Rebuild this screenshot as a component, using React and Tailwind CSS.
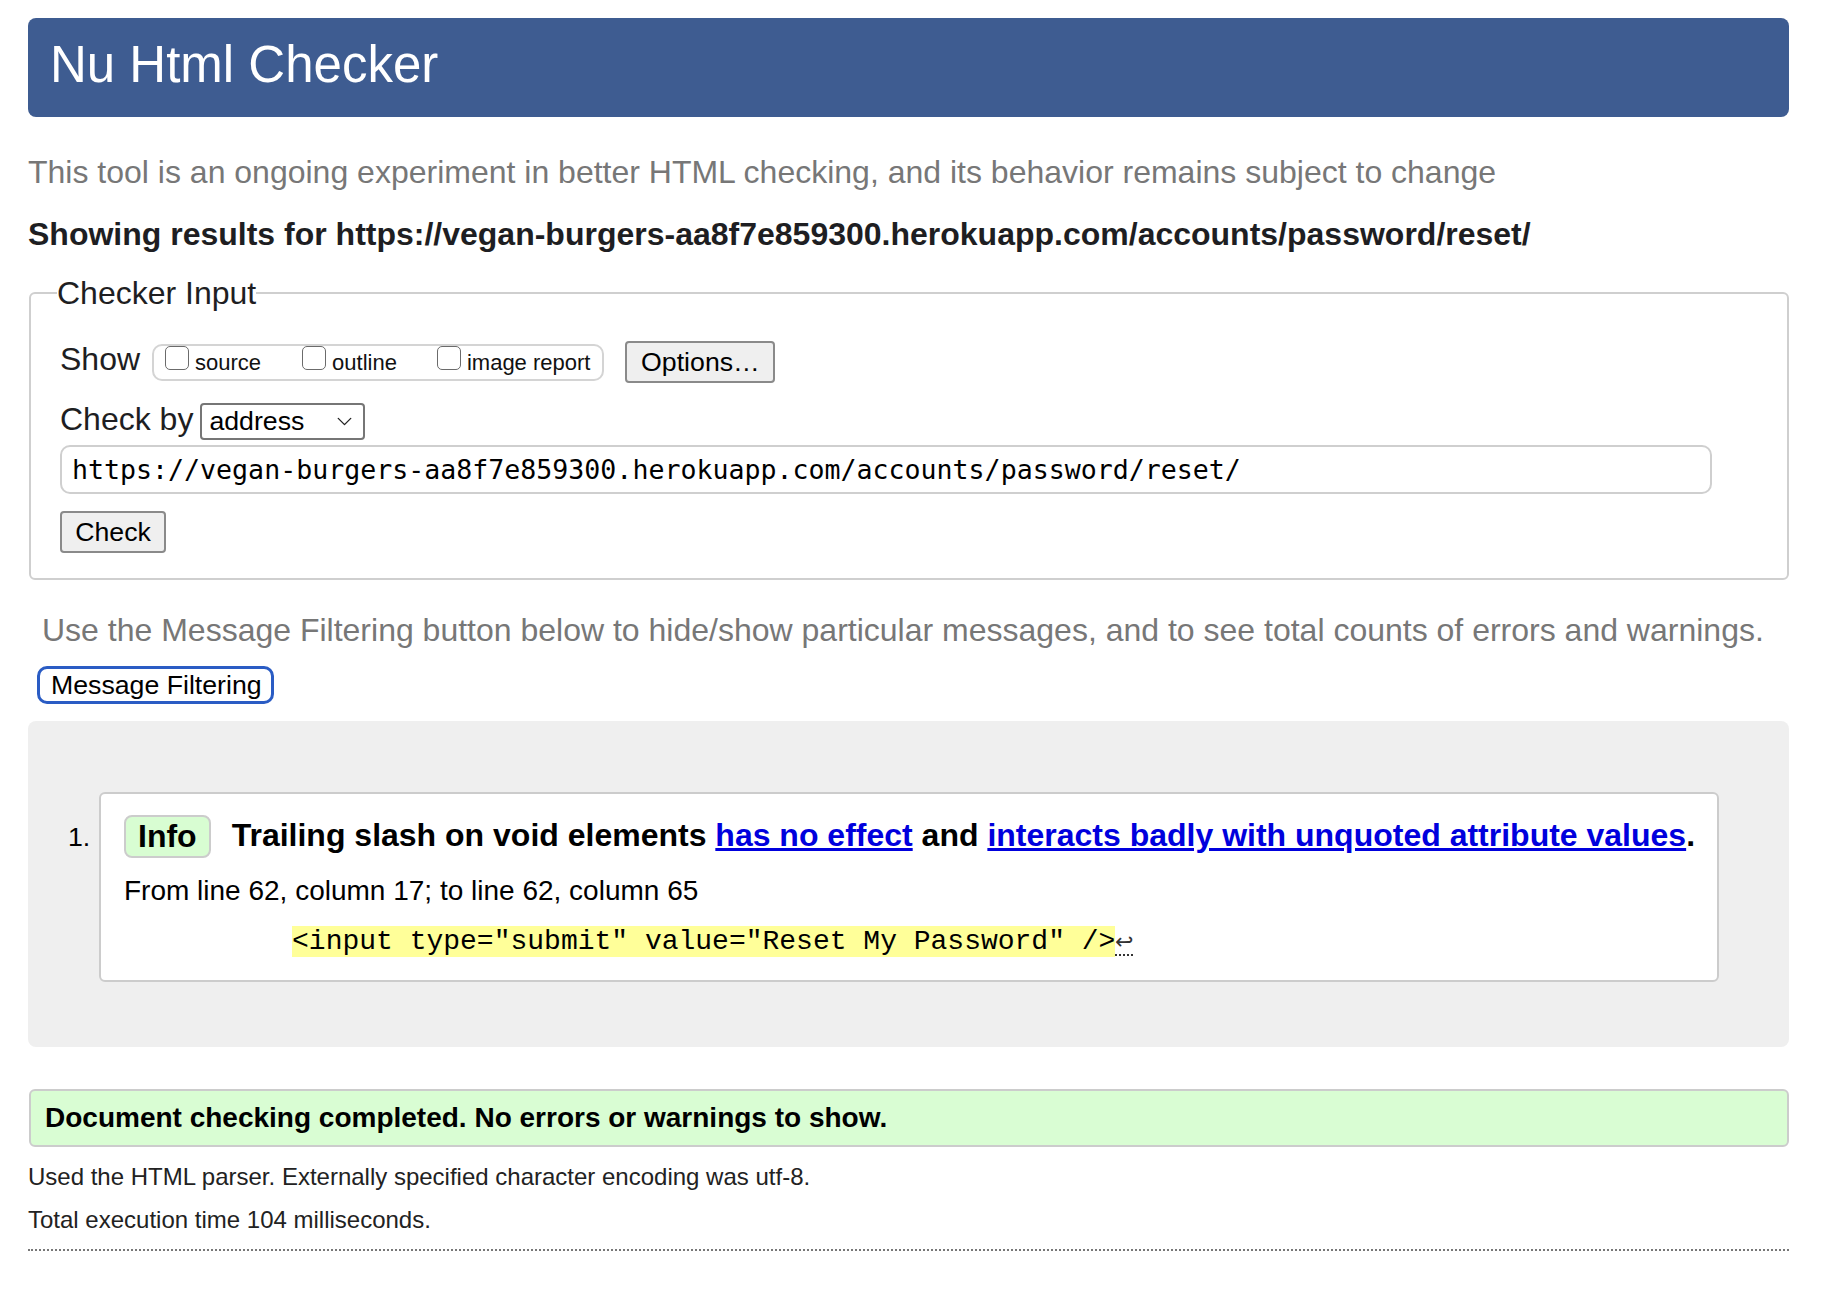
import { ChevronDown } from 'lucide-react'

const sans = "font-['Liberation_Sans','Helvetica','Arial',sans-serif]"

function Box({ label }) {
  return (
    <label className="flex items-end h-[24px]">
      <span className="w-[24px] h-[24px] border-[1.5px] border-[#6b6b6b] rounded-[5px] bg-white shrink-0" />
      <span className="ml-[6px] text-[22px] leading-[15px] text-[#111]">{label}</span>
    </label>
  )
}

export default function App() {
  return (
    <div className={`${sans} bg-white min-h-[1294px] pl-[28px] pr-[35px] pt-[18px] text-[#111]`}>
      <div className="bg-[#3e5c91] rounded-[8px] h-[99px] pl-[22px] pt-[18px]">
        <h1 className="text-[51px] leading-[57px] text-white">Nu Html Checker</h1>
      </div>

      <p className="mt-[35px] text-[32px] leading-[40px] text-[#777777]">
        This tool is an ongoing experiment in better HTML checking, and its behavior remains subject to change
      </p>
      <p className="mt-[22px] text-[32px] leading-[40px] font-bold text-[#1e1e22]">
        Showing results for https://vegan-burgers-aa8f7e859300.herokuapp.com/accounts/password/reset/
      </p>

      <fieldset className="mt-[19px] ml-[1px] border-2 border-[#cfcfcf] rounded-[6px] pl-[29px] pr-[20px] pt-[28px] pb-[25px]">
        <legend className="-ml-[3px] text-[32px] leading-[40px] text-[#1e1e22]">Checker Input</legend>

        <div className="flex items-start h-[42px]">
          <span className="text-[32px] leading-[36px] text-[#1e1e22]">Show</span>
          <div className="ml-[12px] mt-[3px] h-[37px] border-2 border-[#d4d4d4] rounded-[10px] flex items-start pl-[11px] pr-[12px]">
            <Box label="source" />
            <div className="w-[41px]" />
            <Box label="outline" />
            <div className="w-[40px]" />
            <Box label="image report" />
          </div>
          <button className="ml-[21px] w-[150px] h-[42px] bg-[#efefef] border-2 border-[#8a8a8a] rounded-[4px] text-[26.7px] leading-[38px] text-black">
            Options…
          </button>
        </div>

        <div className="mt-[20px] flex items-start">
          <span className="-mt-[2px] text-[32px] leading-[36px] text-[#1e1e22]">Check by</span>
          <div className="ml-[7px] w-[165px] h-[37px] border-2 border-[#767676] rounded-[4px] bg-white flex items-center pl-[7px] pr-[6px]">
            <span className="flex-1 text-[26.7px] leading-[33px] text-black">address</span>
            <ChevronDown size={25} strokeWidth={1.3} className="text-[#222]" />
          </div>
        </div>

        <div className="mt-[5px] mr-[55px] h-[49px] border-2 border-[#cfcfcf] rounded-[10px] bg-white flex items-center pl-[10px]">
          <span className="font-['DejaVu_Sans_Mono',monospace] text-[26.6px] leading-[32px] text-black">
            https://vegan-burgers-aa8f7e859300.herokuapp.com/accounts/password/reset/
          </span>
        </div>

        <button className="mt-[17px] w-[106px] h-[42px] bg-[#efefef] border-2 border-[#8a8a8a] rounded-[4px] text-[26.7px] leading-[38px] text-black block">
          Check
        </button>
      </fieldset>

      <p className="mt-[30px] pl-[14px] text-[32px] leading-[40px] text-[#777777]">
        Use the Message Filtering button below to hide/show particular messages, and to see total counts of errors and warnings.
      </p>
      <button className="mt-[16px] ml-[9px] h-[38px] w-[237px] border-[3px] border-[#2a5cc4] rounded-[10px] bg-white text-left pl-[11px] text-[26.7px] leading-[32px] text-black block">
        Message Filtering
      </button>

      <div className="mt-[17px] bg-[#efefef] rounded-[8px] pt-[71px] pb-[65px] pl-[40px] pr-[70px] flex items-start">
        <span className="w-[31px] mt-[29px] text-[26.7px] leading-[32px] text-black">1.</span>
        <div className="flex-1 bg-white border-2 border-[#cccccc] rounded-[6px] pl-[23px] pt-[21px] pb-[22px]">
          <div className="flex items-start">
            <span className="h-[43px] border-2 border-[#cccccc] rounded-[8px] bg-[#d8fdd2] px-[12px] text-[32px] leading-[39px] font-bold text-black">
              Info
            </span>
            <p className="ml-[21px] mt-0 text-[32px] leading-[40px] font-bold text-black">
              Trailing slash on void elements{' '}
              <a className="text-[#0000dd] underline">has no effect</a>
              {' '}and{' '}
              <a className="text-[#0000dd] underline">interacts badly with unquoted attribute values</a>.
            </p>
          </div>
          <p className="mt-[15px] text-[28px] leading-[36px] text-black">
            From line 62, column 17; to line 62, column 65
          </p>
          <p className="mt-[17px] font-['Liberation_Mono','Courier_New',monospace] text-[28px] leading-[32px] text-black whitespace-pre">
            {'          '}
            <span className="bg-[#ffff99]">{'<input type="submit" value="Reset My Password" />'}</span>
            <span className={`${sans} text-[22px] text-[#333] border-b-2 border-dotted border-[#333]`}>↩</span>
          </p>
        </div>
      </div>

      <div className="mt-[42px] ml-[1px] h-[58px] border-2 border-[#cccccc] rounded-[6px] bg-[#d9fdd3] pl-[14px] pt-[9px]">
        <p className="text-[28px] leading-[36px] font-bold text-black">
          Document checking completed. No errors or warnings to show.
        </p>
      </div>

      <p className="mt-[14px] text-[24px] leading-[32px] text-[#222]">
        Used the HTML parser. Externally specified character encoding was utf-8.
      </p>
      <p className="mt-[11px] text-[24px] leading-[32px] text-[#222]">
        Total execution time 104 milliseconds.
      </p>
      <div className="mt-[13px] border-t-2 border-dotted border-[#777]" />
    </div>
  )
}
